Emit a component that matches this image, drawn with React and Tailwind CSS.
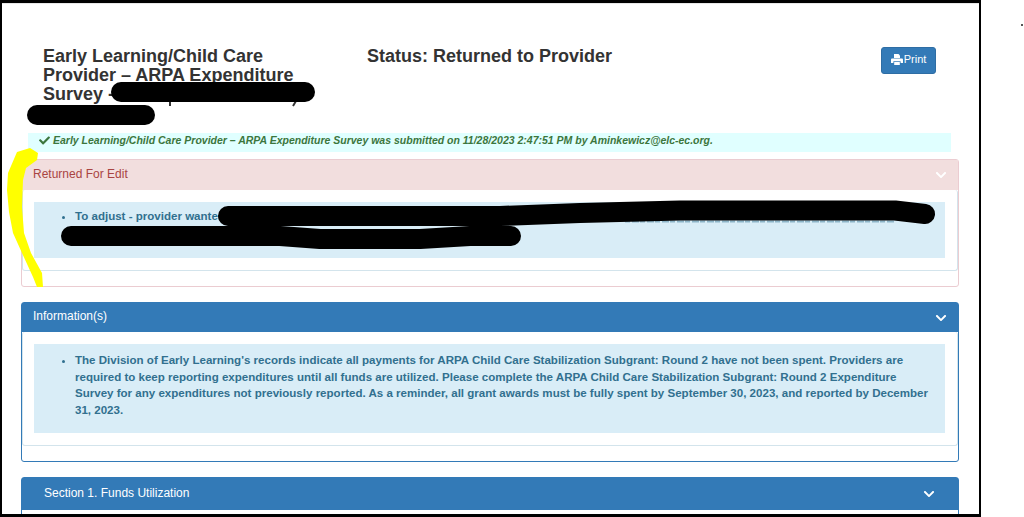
import React from 'react';
import { FaCheck, FaChevronDown } from 'react-icons/fa';

const PrintIcon = () => (
    <svg width="12" height="11" viewBox="0 0 12 11" fill="#fff">
        <path d="M3 0h4.500L9 1.500V4H3z" />
        <path d="M1.200 4.600h9.600c.7 0 1.200.5 1.200 1.200V9H9.600V7.200H2.400V9H0V5.800c0-.7.5-1.200 1.200-1.200z" />
        <path d="M3.200 8h5.600v3H3.200z" />
    </svg>
);

const Panel = ({ title, headerClass, borderClass, chevronClass, titleClass = 'pl-[11px]', labelClass = 'pb-[3px]', children }) => (
    <div className={`rounded-[3px] border ${borderClass}`}>
        <div className={`flex items-center justify-between pr-[11px] text-[12px] ${titleClass} ${headerClass}`}>
            <span className={labelClass}>{title}</span>
            <FaChevronDown className={`text-[12px] ${chevronClass}`} />
        </div>
        {children}
    </div>
);

const AlertBody = ({ boxClass = 'pb-[15px] pt-[8px]', children }) => (
    <div className="pb-[15px]">
        <div className="rounded-[3px] border border-t-0 border-[#d3e4ec] py-[12px] pl-[11px] pr-[12px]">
            <div className={`bg-[#d9edf7] pl-[41px] pr-[12px] text-[11.55px] font-bold leading-[16.5px] text-[#31708f] ${boxClass}`}>
                <ul className="list-disc">{children}</ul>
            </div>
        </div>
    </div>
);

// marker scribble and the black redaction strokes lie on top of the page
const Scribbles = () => (
    <svg className="pointer-events-none absolute left-0 top-0" width="1024" height="517" viewBox="0 0 1024 517">
        <path
            d="M38 153 L30 148 L17 152 L8 173 L7 190 L9 212 L13 233 L22 253 L33 277 L37 287 L43 287 L42 273 L31 253 L24 233 L22 207 L23 180 L26 168 L37 160 Z"
            fill="#ffff00"
        />
        <path d="M625 221.500 L895 221.500" fill="none" stroke="#31708f" strokeOpacity="0.45" strokeWidth="2" strokeDasharray="5 2 7 1" />
        <path d="M170 101 L170 106 M296 101 L293 106" fill="none" stroke="#333" strokeWidth="2" />
        <g fill="none" stroke="#000" strokeLinecap="round" strokeLinejoin="round" strokeWidth="20">
            <path d="M121 92 L305 92" />
            <path d="M37 115 L145 115" />
            <path d="M228 216 L500 216 L580 213 L680 210.500 L895 210.500 L925 214" />
            <path d="M71 236 L280 236 L320 239 L420 239 L470 236 L511 236" />
        </g>
    </svg>
);

const App = () => (
    <div className="relative h-[517px] w-[1024px] overflow-hidden bg-white font-['Liberation_Sans',Arial,sans-serif] text-[#333]">
        <div className="h-[517px] w-[981px] overflow-hidden border-t-[3px] border-r-[2px] border-b-[3px] border-l-[2px] border-black">
            <div className="h-full border-t border-[#e7e7e7]">
                <div className="flex pl-[41px] pr-[43px] pt-[43px]">
                    <h3 className="h-[86px] w-[324px] pr-[50px] text-[18px] font-bold leading-[19px]">
                        Early Learning/Child Care Provider – ARPA Expenditure Survey -
                    </h3>
                    <h3 className="flex-1 text-[18px] font-bold leading-[19px]">Status: Returned to Provider</h3>
                    <button className="flex h-[27px] w-[55px] items-center justify-center gap-[1px] rounded-[3px] border border-[#2e6da4] bg-[#337ab7] pb-[2px] text-[11px] text-white">
                        <PrintIcon />
                        Print
                    </button>
                </div>

                <div className="ml-[26px] mr-[28px] flex h-[19px] items-center gap-[3px] bg-[#e0ffff] pb-[4px] pl-[11px] text-[10.5px] font-bold italic text-[#3c763d]">
                    <FaCheck className="text-[11px]" />
                    <span>Early Learning/Child Care Provider – ARPA Expenditure Survey was submitted on 11/28/2023 2:47:51 PM by Aminkewicz@elc-ec.org.</span>
                </div>

                <div className="ml-[19px] mr-[20px] mt-[7px] flex flex-col gap-[15px]">
                    <Panel
                        title="Returned For Edit"
                        headerClass="h-[30px] bg-[#f2dede] text-[#a94442]"
                        borderClass="border-[#ebccd1]"
                        chevronClass="text-white"
                        labelClass="pb-[2px]"
                    >
                        <AlertBody boxClass="pb-[17px] pt-[6px]">
                            <li>
                                To adjust - provider wanted
                                <br />
                                &nbsp;
                            </li>
                        </AlertBody>
                    </Panel>

                    <Panel
                        title="Information(s)"
                        headerClass="h-[29px] bg-[#337ab7] text-white"
                        borderClass="border-[#337ab7]"
                        chevronClass="text-white"
                    >
                        <AlertBody>
                            <li>
                                The Division of Early Learning's records indicate all payments for ARPA Child Care Stabilization Subgrant: Round 2 have not been spent. Providers are required to keep reporting expenditures until all funds are utilized. Please complete the ARPA Child Care Stabilization Subgrant: Round 2 Expenditure Survey for any expenditures not previously reported. As a reminder, all grant awards must be fully spent by September 30, 2023, and reported by December 31, 2023.
                            </li>
                        </AlertBody>
                    </Panel>

                    <Panel
                        title="Section 1. Funds Utilization"
                        headerClass="h-[32px] bg-[#337ab7] text-white"
                        borderClass="border-[#337ab7]"
                        chevronClass="mr-[12px] text-white"
                        titleClass="pl-[22px]"
                    >
                        <div className="h-[20px]" />
                    </Panel>
                </div>
            </div>
        </div>
        <span className="absolute left-[1021px] top-[24px] h-[2px] w-[2px] bg-[#555]" />
        <Scribbles />
    </div>
);

export default App;
